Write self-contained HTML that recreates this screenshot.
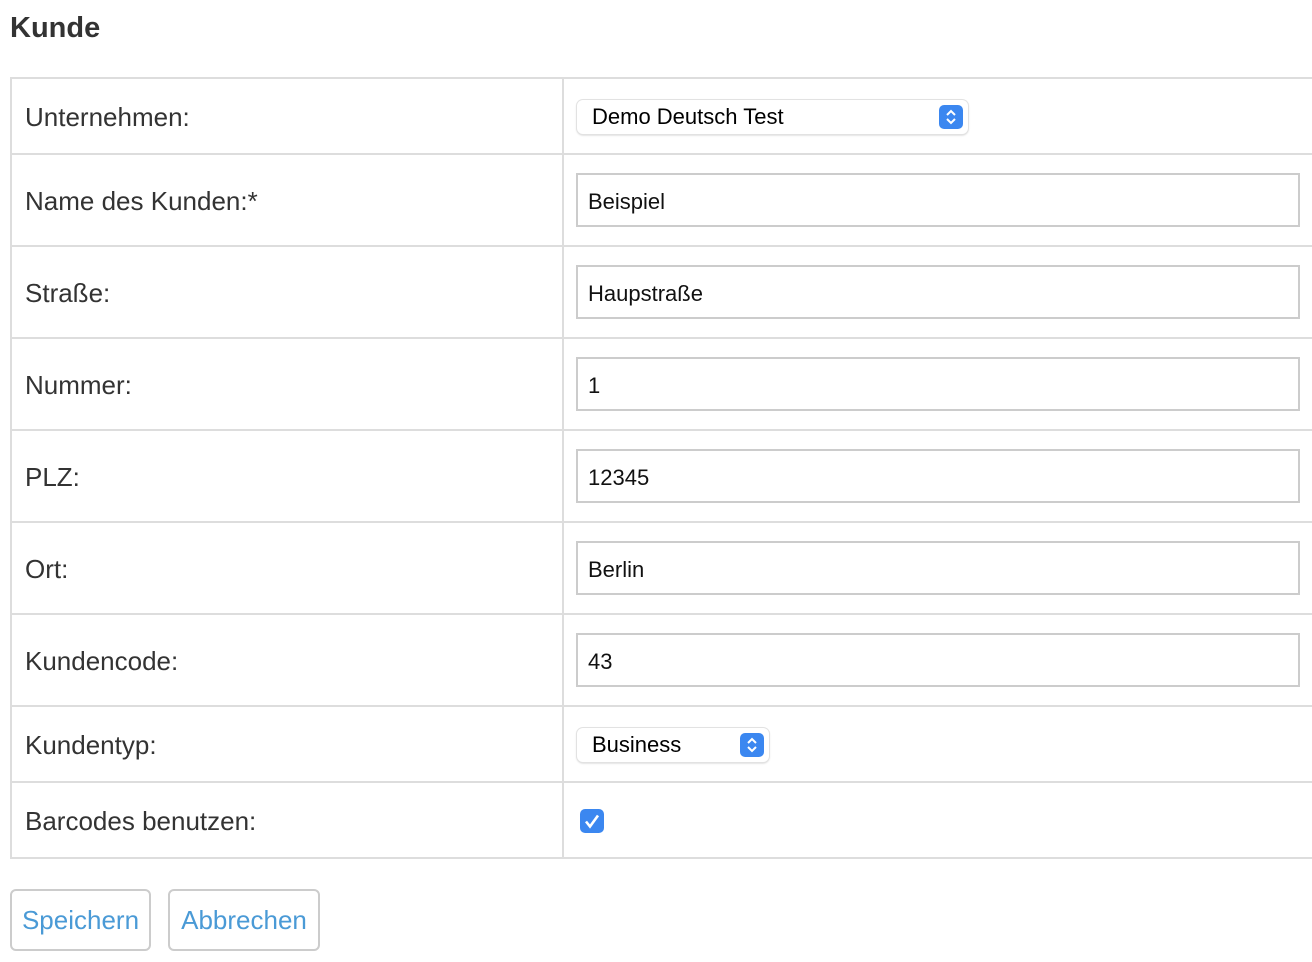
<!DOCTYPE html>
<html><head><meta charset="utf-8"><style>
*{box-sizing:border-box;margin:0;padding:0}
body{width:1312px;height:962px;background:#fff;font-family:"Liberation Sans",sans-serif;color:#333;position:relative;overflow:hidden}
.a{position:absolute}
h1{position:absolute;left:10px;top:12px;font-size:29px;font-weight:bold;color:#333}
.hl{position:absolute;left:10px;width:1302px;height:2px;background:#ddd}
.lbl{position:absolute;left:25px;font-size:26px;color:#333;line-height:30px}
.inp{position:absolute;left:576px;width:724px;height:54px;border:2px solid #ccc;font-size:22px;color:#111;padding-left:10px;padding-top:2px;line-height:50px}
.sel{position:absolute;left:577px;height:34px;border-radius:6px;background:#fff;box-shadow:0 0 0 1px #e2e2e2,0 1px 2px rgba(0,0,0,.25);font-size:22px;color:#000;padding-left:15px;line-height:34px}
.arr{position:absolute;right:5px;top:5px;width:24px;height:24px;border-radius:5px;background:#3b87f0}
.btn{position:absolute;top:889px;height:62px;border:2px solid #ccc;border-radius:6px;color:#4a9ad6;font-size:26px;line-height:58px;text-align:center}
</style></head><body>
<h1>Kunde</h1>
<div class="a" style="left:10px;top:77px;width:2px;height:782px;background:#ddd"></div>
<div class="a" style="left:562px;top:77px;width:2px;height:782px;background:#ddd"></div>
<div class="hl" style="top:77px"></div>
<div class="hl" style="top:153px"></div>
<div class="hl" style="top:245px"></div>
<div class="hl" style="top:337px"></div>
<div class="hl" style="top:429px"></div>
<div class="hl" style="top:521px"></div>
<div class="hl" style="top:613px"></div>
<div class="hl" style="top:705px"></div>
<div class="hl" style="top:781px"></div>
<div class="hl" style="top:857px"></div>

<div class="lbl" style="top:102px">Unternehmen:</div>
<div class="lbl" style="top:186px">Name des Kunden:*</div>
<div class="lbl" style="top:278px">Straße:</div>
<div class="lbl" style="top:370px">Nummer:</div>
<div class="lbl" style="top:462px">PLZ:</div>
<div class="lbl" style="top:554px">Ort:</div>
<div class="lbl" style="top:646px">Kundencode:</div>
<div class="lbl" style="top:730px">Kundentyp:</div>
<div class="lbl" style="top:806px">Barcodes benutzen:</div>

<div class="sel" style="top:100px;width:391px">Demo Deutsch Test<div class="arr"><svg width="24" height="24" viewBox="0 0 24 24"><path d="M8 10l4-4 4 4M8 14l4 4 4-4" fill="none" stroke="#fff" stroke-width="2"/></svg></div></div>
<div class="inp" style="top:173px">Beispiel</div>
<div class="inp" style="top:265px">Haupstraße</div>
<div class="inp" style="top:357px">1</div>
<div class="inp" style="top:449px">12345</div>
<div class="inp" style="top:541px">Berlin</div>
<div class="inp" style="top:633px">43</div>
<div class="sel" style="top:728px;width:192px">Business<div class="arr"><svg width="24" height="24" viewBox="0 0 24 24"><path d="M8 10l4-4 4 4M8 14l4 4 4-4" fill="none" stroke="#fff" stroke-width="2"/></svg></div></div>
<div class="a" style="left:580px;top:809px;width:24px;height:24px;border-radius:5px;background:#3b87f0"><svg width="24" height="24" viewBox="0 0 24 24"><path d="M6 12.5l4 5 8-11" fill="none" stroke="#fff" stroke-width="2.6"/></svg></div>

<div class="btn" style="left:10px;width:141px">Speichern</div>
<div class="btn" style="left:168px;width:152px">Abbrechen</div>
</body></html>
